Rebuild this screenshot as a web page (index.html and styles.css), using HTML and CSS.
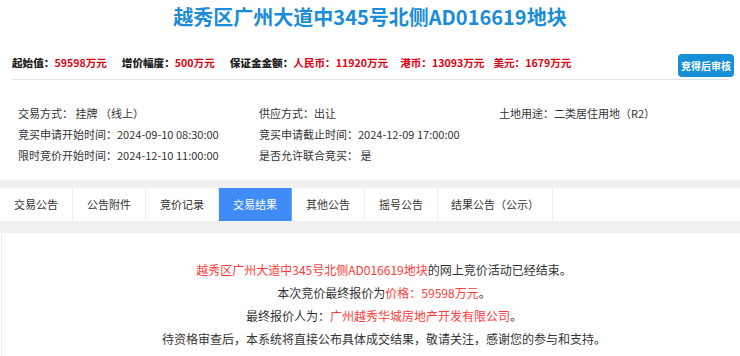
FILE: index.html
```html
<!DOCTYPE html>
<html lang="zh-CN">
<head>
<meta charset="utf-8">
<link rel="stylesheet" href="styles.css">
</head>
<body>
<div class="title">越秀区广州大道中345号北侧AD016619地块</div>
<div class="prices">
  <div class="price-list">
    <span class="item"><b>起始值：</b><em>59598万元</em></span>
    <span class="item"><b>增价幅度：</b><em>500万元</em></span>
    <span class="item"><b>保证金金额：</b><em>人民币：11920万元</em><em class="sub hk">港币：13093万元</em><em class="sub us">美元：1679万元</em></span>
  </div>
  <button class="btn">竞得后审核</button>
</div>
<div class="info">
  <div>交易方式： 挂牌 （线上）</div>
  <div>供应方式：出让</div>
  <div>土地用途：二类居住用地（R2）</div>
  <div>竞买申请开始时间：2024-09-10 08:30:00</div>
  <div>竞买申请截止时间：2024-12-09 17:00:00</div>
  <div></div>
  <div>限时竞价开始时间：2024-12-10 11:00:00</div>
  <div>是否允许联合竞买： 是</div>
  <div></div>
</div>
<div class="tabs-wrap">
  <div class="tabs">
    <div class="tab">交易公告</div>
    <div class="tab">公告附件</div>
    <div class="tab">竞价记录</div>
    <div class="tab active">交易结果</div>
    <div class="tab">其他公告</div>
    <div class="tab">摇号公告</div>
    <div class="tab wide">结果公告（公示）</div>
  </div>
</div>
<div class="content">
  <p><span class="red">越秀区广州大道中345号北侧AD016619地块</span>的网上竞价活动已经结束。</p>
  <p>本次竞价最终报价为<span class="red">价格：59598万元</span>。</p>
  <p>最终报价人为：<span class="red">广州越秀华城房地产开发有限公司</span>。</p>
  <p>待资格审查后，本系统将直接公布具体成交结果，敬请关注，感谢您的参与和支持。</p>
</div>
</body>
</html>
```
FILE: styles.css
```css
* { box-sizing: border-box; }
html, body { margin: 0; padding: 0; background: #fff; }
body {
  font-family: "Noto Sans CJK SC", "Noto Sans", sans-serif;
  color: #333;
  width: 740px;
  overflow: hidden;
}
.title {
  height: 34px;
  line-height: 34px;
  text-align: center;
  font-size: 20px;
  font-weight: bold;
  color: #1a8cd8;
}
.prices {
  margin: 20px 12px 0 12px;
  padding-bottom: 2px;
  border-bottom: 1px solid #e3e3e3;
  display: flex;
  justify-content: space-between;
  align-items: flex-start;
}
.price-list {
  display: flex;
  gap: 15px;
  font-size: 10.6px;
  line-height: 18px;
  font-weight: bold;
}
.price-list b { color: #222; }
.price-list em { font-style: normal; color: #e0000f; }
.price-list em.hk { margin-left: 12px; }
.price-list em.us { margin-left: 9px; }
.btn {
  margin-right: -6px;
  width: 56px;
  height: 23px;
  border: none;
  border-radius: 4px;
  background: #168fd6;
  color: #fff;
  font-family: inherit;
  font-weight: bold;
  font-size: 10px;
  padding: 0;
}
.info {
  display: grid;
  grid-template-columns: 241px 240px 240px;
  padding: 23px 0 14px 18px;
  font-size: 11px;
  line-height: 21px;
  color: #333;
}
.tabs-wrap {
  background: #f0f0f0;
  padding: 8px 0 11px 0;
}
.tabs {
  display: flex;
  background: #fff;
  height: 33px;
}
.tab {
  width: 73px;
  border-right: 1px solid #eeeeee;
  text-align: center;
  line-height: 33px;
  font-size: 11px;
  color: #333;
}
.tab.wide { width: 115px; }
.tab.active { background: #3f8cf7; color: #fff; border-right-color: #6aa7f9; }
.content {
  border-left: 1px solid #eee;
  border-top: 1px solid #eee;
  margin-left: 1px;
  padding: 25px 0 20px 26px;
  text-align: center;
  font-size: 12px;
  line-height: 23px;
  color: #333;
}
.content p { margin: 0; }
.content .red { color: #ff3b3b; }
```
